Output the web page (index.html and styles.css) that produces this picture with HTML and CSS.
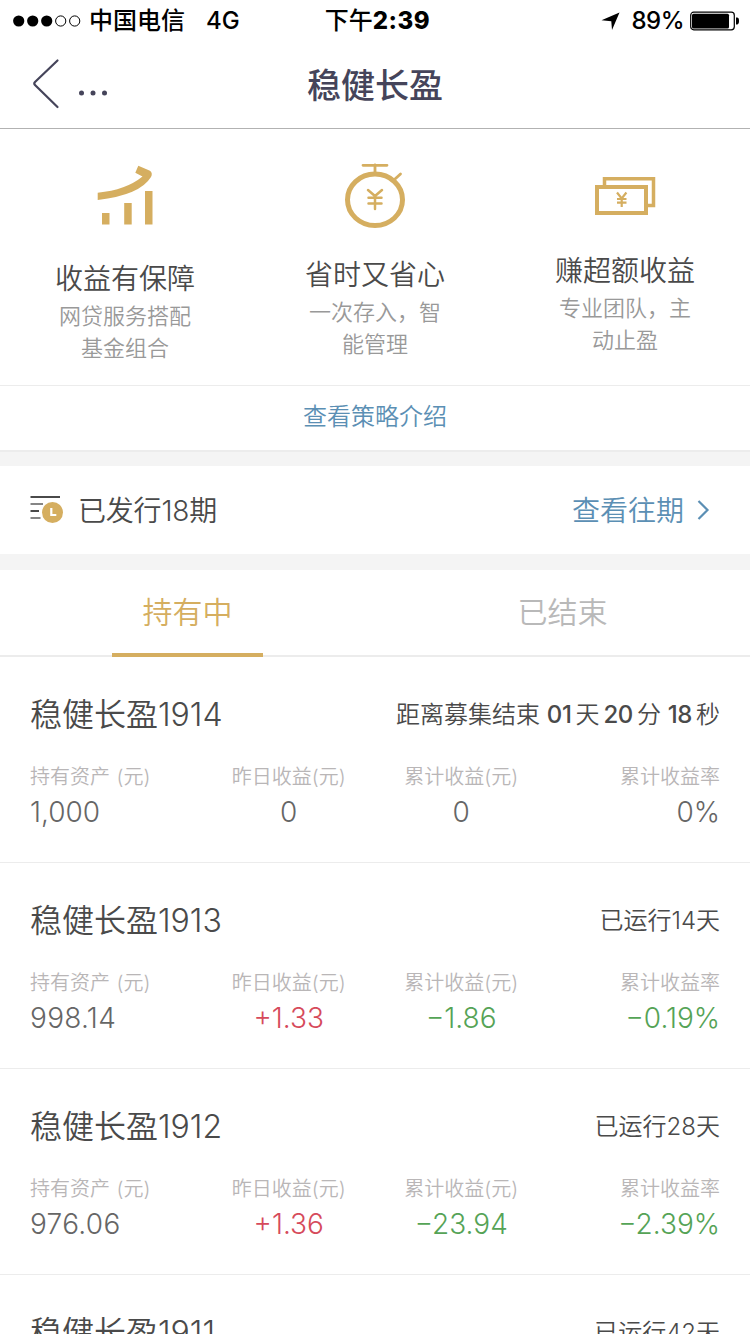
FILE: index.html
```html
<!DOCTYPE html>
<html lang="zh-CN">
<head>
   <meta charset="UTF-8">
   <meta name="viewport" content="width=device-width, initial-scale=1.0">
   <title>稳健长盈</title>
   <link rel="stylesheet" href="styles.css">
</head>
<body>
   <div class="status-bar">
      <div class="status-left">
         <svg class="signal" width="68" height="12" viewBox="0 0 68 12">
            <circle cx="5.7" cy="6" r="5.6"/>
            <circle cx="19.7" cy="6" r="5.6"/>
            <circle cx="33.7" cy="6" r="5.6"/>
            <circle cx="47.7" cy="6" r="5.1" fill="none" stroke="#000"/>
            <circle cx="61.7" cy="6" r="5.1" fill="none" stroke="#000"/>
         </svg>
         <span class="carrier">中国电信</span>
         <span class="network">4G</span>
      </div>
      <div class="clock">下午<b>2:39</b></div>
      <div class="status-right">
         <svg width="20" height="20" viewBox="0 0 20 20">
            <path d="M19.500 1.500 L12 19 L11.300 10.200 L1.500 9.300 Z"/>
         </svg>
         <span class="percent">89%</span>
         <svg width="49" height="20" viewBox="0 0 49 20">
            <rect x="0.7" y="1.2" width="43.6" height="17.6" rx="3" fill="none" stroke="#000" stroke-width="1.2"/>
            <rect x="2" y="2.7" width="37" height="14.7" rx="1.5"/>
            <path d="M46 6.6 h1 q2 0 2 3.4 t-2 3.4 h-1z"/>
         </svg>
      </div>
   </div>

   <div class="nav">
      <div class="back">
         <svg width="30" height="52" viewBox="0 0 30 52">
            <path d="M27.500 2.500 L5 24 Q3.500 25.500 5 27 L27.500 49" fill="none" stroke="#45445a" stroke-width="2.200" stroke-linecap="round"/>
         </svg>
         <svg class="dots" width="30" height="6" viewBox="0 0 30 6" fill="#45445a">
            <circle cx="3.500" cy="3" r="2.500"/>
            <circle cx="15" cy="3" r="2.500"/>
            <circle cx="26.500" cy="3" r="2.500"/>
         </svg>
      </div>
      <h1>稳健长盈</h1>
   </div>

   <div class="features">
      <div class="feature">
         <svg width="60" height="70" viewBox="0 0 60 70" fill="#d5ae60">
            <path d="M2.700 32.700 Q31 30 47.500 16.500 L40.300 12.700 L43.300 5.700 L55 10.700 Q58 13 56 17 Q45 35 2.700 40z"/>
            <path d="M7 53h7.500v11.500H7z M29.200 43h7.500v21.500h-7.500z M50 31h7.500v33.500H50z"/>
         </svg>
         <h2>收益有保障</h2>
         <p>网贷服务搭配基金组合</p>
      </div>
      <div class="feature">
         <svg width="64" height="66" viewBox="0 4 64 66" fill="none" stroke="#d5ae60">
            <ellipse cx="32" cy="43.800" rx="27.500" ry="25.700" stroke-width="5"/>
            <path d="M20 9.300h24 M32 9v8 M52 23l5.500-5" stroke-width="2.800" stroke-linecap="round"/>
            <path d="M25 34l7 6 7-6 M32 40v13 M25.500 41.700h13 M25.500 47.500h13" stroke-width="2.500" stroke-linecap="round"/>
         </svg>
         <h2>省时又省心</h2>
         <p>一次存入，智能管理</p>
      </div>
      <div class="feature">
         <svg width="60" height="62" viewBox="0 0 60 62" fill="none" stroke="#d5ae60">
            <path d="M9.500 25V18.700H58.500V45.500H53" stroke-width="3.500"/>
            <path d="M2 27h49v26H2z" stroke-width="4"/>
            <path d="M22 32.500l4.700 6 4.700-6 M26.700 38v9 M22 39h9.500 M22 42.700h9.500" stroke-width="2.200"/>
         </svg>
         <h2>赚超额收益</h2>
         <p>专业团队，主动止盈</p>
      </div>
   </div>
   <a class="strategy">查看策略介绍</a>

   <div class="issued">
      <svg width="34" height="32" viewBox="0 0 34 32">
         <path d="M.5 3H30 M.5 17H9" stroke="#4a4a4a" stroke-width="2"/>
         <path d="M.5 10H13 M.5 24H10.500" stroke="#858585" stroke-width="2"/>
         <circle cx="22.500" cy="18.500" r="10.500" fill="#d5ae60"/>
         <path d="M21.300 14v7h5" fill="none" stroke="#fff" stroke-width="2.200"/>
      </svg>
      <span class="issued-text">已发行18期</span>
      <a class="history">查看往期</a>
      <svg width="14" height="24" viewBox="0 0 14 24">
         <path d="M2.500 3l9 9-9 9" fill="none" stroke="#5b8fb4" stroke-width="2.200"/>
      </svg>
   </div>

   <div class="tabs">
      <div class="tab active"><span>持有中</span></div>
      <div class="tab"><span>已结束</span></div>
   </div>

   <div class="plan">
      <div class="plan-head">
         <h3>稳健长盈1914</h3>
         <div class="countdown">距离募集结束 <b>01</b><i>天</i><b>20</b><i class="minute">分</i> <b>18</b><i>秒</i></div>
      </div>
      <div class="stats">
         <div class="stat"><label>持有资产 (元)</label><span>1,000</span></div>
         <div class="stat"><label>昨日收益(元)</label><span>0</span></div>
         <div class="stat"><label>累计收益(元)</label><span>0</span></div>
         <div class="stat"><label>累计收益率</label><span>0%</span></div>
      </div>
   </div>

   <div class="plan">
      <div class="plan-head">
         <h3>稳健长盈1913</h3>
         <div class="running">已运行14天</div>
      </div>
      <div class="stats">
         <div class="stat"><label>持有资产 (元)</label><span class="amount">998.14</span></div>
         <div class="stat"><label>昨日收益(元)</label><span class="up">+1.33</span></div>
         <div class="stat"><label>累计收益(元)</label><span class="down">−1.86</span></div>
         <div class="stat"><label>累计收益率</label><span class="down">−0.19%</span></div>
      </div>
   </div>

   <div class="plan">
      <div class="plan-head">
         <h3>稳健长盈1912</h3>
         <div class="running">已运行28天</div>
      </div>
      <div class="stats">
         <div class="stat"><label>持有资产 (元)</label><span class="amount">976.06</span></div>
         <div class="stat"><label>昨日收益(元)</label><span class="up">+1.36</span></div>
         <div class="stat"><label>累计收益(元)</label><span class="down">−23.94</span></div>
         <div class="stat"><label>累计收益率</label><span class="down">−2.39%</span></div>
      </div>
   </div>

   <div class="plan last">
      <div class="plan-head">
         <h3>稳健长盈1911</h3>
         <div class="running">已运行42天</div>
      </div>
   </div>
</body>
</html>
```
FILE: styles.css
```css
* {
   box-sizing: border-box;
   margin: 0;
   padding: 0;
}

body {
   width: 750px;
   height: 1334px;
   overflow: hidden;
   background-color: #fff;
   color: #4a4a4a;
   font-family: Inter, 'Noto Sans CJK SC', sans-serif;
   font-weight: 350;
}

svg {
   display: block;
   flex-shrink: 0;
   overflow: visible;
}

.status-bar {
   display: grid;
   grid-template-columns: 1fr auto 1fr;
   align-items: center;
   height: 40px;
   padding: 0 11px 0 13px;
   color: #000;
   font-size: 24px;
   font-weight: 500;
   line-height: 42px;
}

.status-left,
.status-right {
   display: flex;
   align-items: center;
}

.status-right {
   justify-content: flex-end;
}

.carrier {
   margin-left: 8px;
}

.network {
   margin-left: 21px;
}

.clock {
   margin-left: 3px;
}

.clock b {
   font-weight: 800;
   letter-spacing: 0.5px;
}

.percent {
   margin: 0 6px 0 11px;
   letter-spacing: -0.5px;
}

.nav {
   display: grid;
   grid-template-columns: 1fr auto 1fr;
   height: 89px;
   padding: 0 30px;
   border-bottom: 1px solid #b2b2b2;
   color: #45445a;
}

.nav h1 {
   font-size: 34px;
   font-weight: 500;
   line-height: 91px;
}

.back {
   display: flex;
   align-items: center;
   height: 87px;
}

.dots {
   margin: 18px 0 0 18px;
}

.features {
   display: grid;
   grid-template-columns: repeat(3, 1fr);
   height: 257px;
   padding-top: 31px;
   border-bottom: 1px solid #ececec;
}

.feature {
   display: flex;
   flex-direction: column;
   align-items: center;
   text-align: center;
}

.feature h2 {
   margin: 29px 0 1px;
   font-size: 28px;
   font-weight: 350;
   line-height: 40px;
}

.feature p {
   width: 134px;
   color: #999;
   font-size: 22px;
   line-height: 32px;
}

.strategy {
   display: block;
   height: 66px;
   border-bottom: 2px solid #ececec;
   color: #5b8fb4;
   font-size: 24px;
   line-height: 62px;
   text-align: center;
}

.issued {
   display: flex;
   align-items: center;
   height: 118px;
   padding: 0 40px 0 30px;
   border-top: 14px solid #f4f4f4;
   border-bottom: 16px solid #f4f4f4;
   font-size: 28px;
   line-height: 86px;
}

.issued-text {
   margin-left: 14px;
   padding-top: 2px;
   letter-spacing: -0.2px;
}

.history {
   margin: 0 12px 0 auto;
   padding-top: 2px;
   color: #5b8fb4;
}

.tabs {
   display: grid;
   grid-template-columns: 1fr 1fr;
   height: 87px;
   border-bottom: 2px solid #ececec;
}

.tab {
   display: flex;
   justify-content: center;
   height: 87px;
   color: #b9b9b9;
   font-size: 30px;
   line-height: 84px;
}

.tab span {
   width: 151px;
   height: 87px;
   text-align: center;
}

.active span {
   border-bottom: 4px solid #d5ae60;
   color: #d5ae60;
}

.plan {
   height: 206px;
   padding: 34px 30px 0;
   border-bottom: 1px solid #ececec;
}

.plan.last {
   height: 59px;
   border-bottom: none;
}

.plan-head {
   display: flex;
   justify-content: space-between;
   line-height: 48px;
}

.plan-head h3 {
   font-size: 32px;
   font-weight: 350;
}

.countdown,
.running {
   font-size: 24px;
}

.countdown b {
   font-weight: 500;
   letter-spacing: -0.4px;
}

.countdown i {
   margin: 0 4px;
   font-style: normal;
}

.countdown .minute,
.countdown i:last-child {
   margin-right: 0;
}

.stats {
   display: grid;
   grid-template-columns: repeat(4, 1fr);
   margin-top: 22px;
}

.stat {
   display: flex;
   flex-direction: column;
   text-align: center;
}

.stat:first-child {
   text-align: left;
}

.stat:last-child {
   text-align: right;
}

.stat label {
   color: #b9b6b7;
   font-size: 20px;
   line-height: 32px;
   word-spacing: 1px;
}

.stat span {
   color: #666;
   font-size: 28px;
   line-height: 38px;
}

.stat .amount {
   letter-spacing: 0.3px;
}

.stat .up {
   color: #d64a5b;
}

.stat .down {
   color: #55a356;
}
```
